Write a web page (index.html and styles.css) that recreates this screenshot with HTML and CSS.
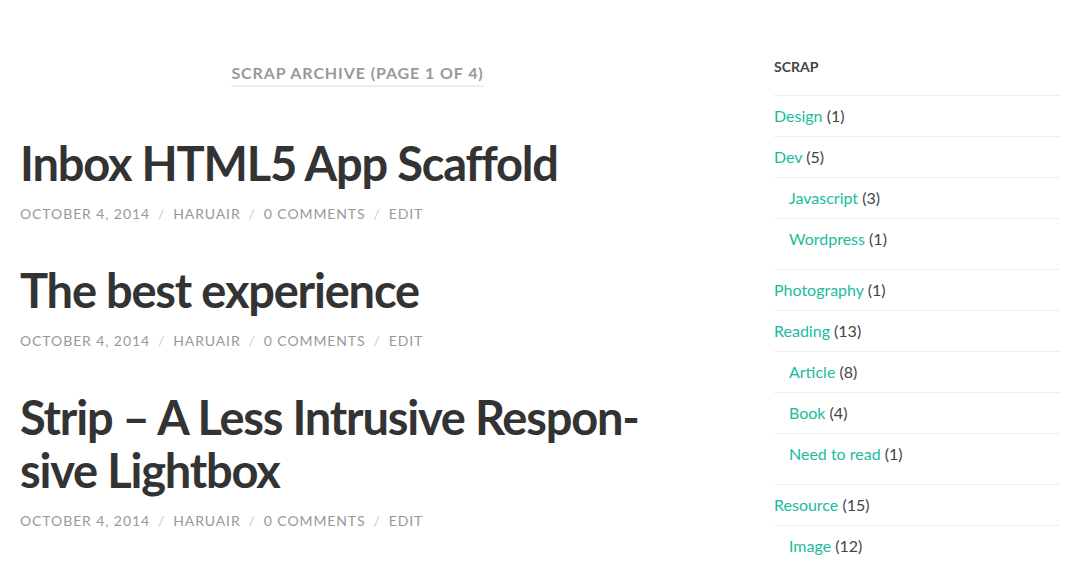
FILE: index.html
```html
<!DOCTYPE html>
<html lang="en">
<head>
  <meta charset="UTF-8">
  <title>Scrap Archive</title>
  <link rel="stylesheet" href="styles.css">
</head>
<body>
  <div class="wrapper">
    <div class="content">
      <div class="page-title">
        <h4>Scrap Archive (Page 1 of 4)</h4>
      </div>

      <!-- Posts -->
      <div class="post">
        <h2 class="post-title"><a href="#">Inbox HTML5 App Scaffold</a></h2>
        <div class="post-meta">
          <span>October 4, 2014</span><span class="sep">/</span><span>haruair</span><span class="sep">/</span><span>0 Comments</span><span class="sep">/</span><span>Edit</span>
        </div>
      </div>

      <div class="post">
        <h2 class="post-title"><a href="#">The best experience</a></h2>
        <div class="post-meta">
          <span>October 4, 2014</span><span class="sep">/</span><span>haruair</span><span class="sep">/</span><span>0 Comments</span><span class="sep">/</span><span>Edit</span>
        </div>
      </div>

      <div class="post">
        <h2 class="post-title"><a href="#">Strip – A Less Intrusive Respon&shy;sive Lightbox</a></h2>
        <div class="post-meta">
          <span>October 4, 2014</span><span class="sep">/</span><span>haruair</span><span class="sep">/</span><span>0 Comments</span><span class="sep">/</span><span>Edit</span>
        </div>
      </div>
    </div>

    <!-- Sidebar -->
    <div class="sidebar">
      <div class="widget">
        <h3 class="widget-title">Scrap</h3>
        <ul class="cat-list">
          <li><a href="#">Design</a> (1)</li>
          <li><a href="#">Dev</a> (5)
            <ul class="children">
              <li><a href="#">Javascript</a> (3)</li>
              <li><a href="#">Wordpress</a> (1)</li>
            </ul>
          </li>
          <li><a href="#">Photography</a> (1)</li>
          <li><a href="#">Reading</a> (13)
            <ul class="children">
              <li><a href="#">Article</a> (8)</li>
              <li><a href="#">Book</a> (4)</li>
              <li><a href="#">Need to read</a> (1)</li>
            </ul>
          </li>
          <li><a href="#">Resource</a> (15)
            <ul class="children">
              <li><a href="#">Image</a> (12)</li>
            </ul>
          </li>
        </ul>
      </div>
    </div>
  </div>
</body>
</html>
```

FILE: styles.css
```css
body {
  margin: 0;
  padding: 0;
  font-family: Lato, "Open Sans", sans-serif;
  color: #333;
  background: #fff;
  overflow: hidden;
}
a {
  text-decoration: none;
}
.wrapper {
  display: flex;
  padding: 0 14px 0 20px;
  gap: 79px;
}
.content {
  width: 675px;
  flex-shrink: 0;
}
.page-title {
  text-align: center;
  padding-top: 63px;
}
.page-title h4 {
  display: inline-block;
  margin: 0;
  padding-bottom: 2px;
  border-bottom: 2px solid #eee;
  font-size: 16px;
  line-height: 20px;
  font-weight: 700;
  text-transform: uppercase;
  letter-spacing: 0.9px;
  color: #999;
}
.post {
  margin-top: 50px;
}
.post + .post {
  margin-top: 40px;
}
.post-title {
  margin: 0;
  font-size: 47px;
  line-height: 53px;
  font-weight: 700;
  letter-spacing: -1.2px;
  hyphens: manual;
}
.post-title a {
  color: #333;
}
.post-meta {
  margin-top: 14px;
  font-size: 14px;
  line-height: 20px;
  text-transform: uppercase;
  letter-spacing: 0.9px;
  color: #999;
}
.post-meta .sep {
  color: #ccc;
  margin: 0 8px;
}
.sidebar {
  width: 286px;
  flex-shrink: 0;
}
.widget-title {
  margin: 57px 0 18px;
  font-size: 14px;
  line-height: 20px;
  font-weight: 700;
  text-transform: uppercase;
  color: #444;
}
.cat-list,
.cat-list ul {
  list-style: none;
  margin: 0;
  padding: 0;
}
.cat-list li {
  border-top: 1px solid #eee;
  padding: 10px 0;
  font-size: 16px;
  line-height: 20px;
  color: #444;
}
.cat-list a {
  color: #1abc9c;
}
.cat-list .children {
  margin-top: 10px;
}
.cat-list .children li {
  padding-left: 15px;
}
.cat-list .children li:last-child {
  padding-bottom: 10px;
}
```
